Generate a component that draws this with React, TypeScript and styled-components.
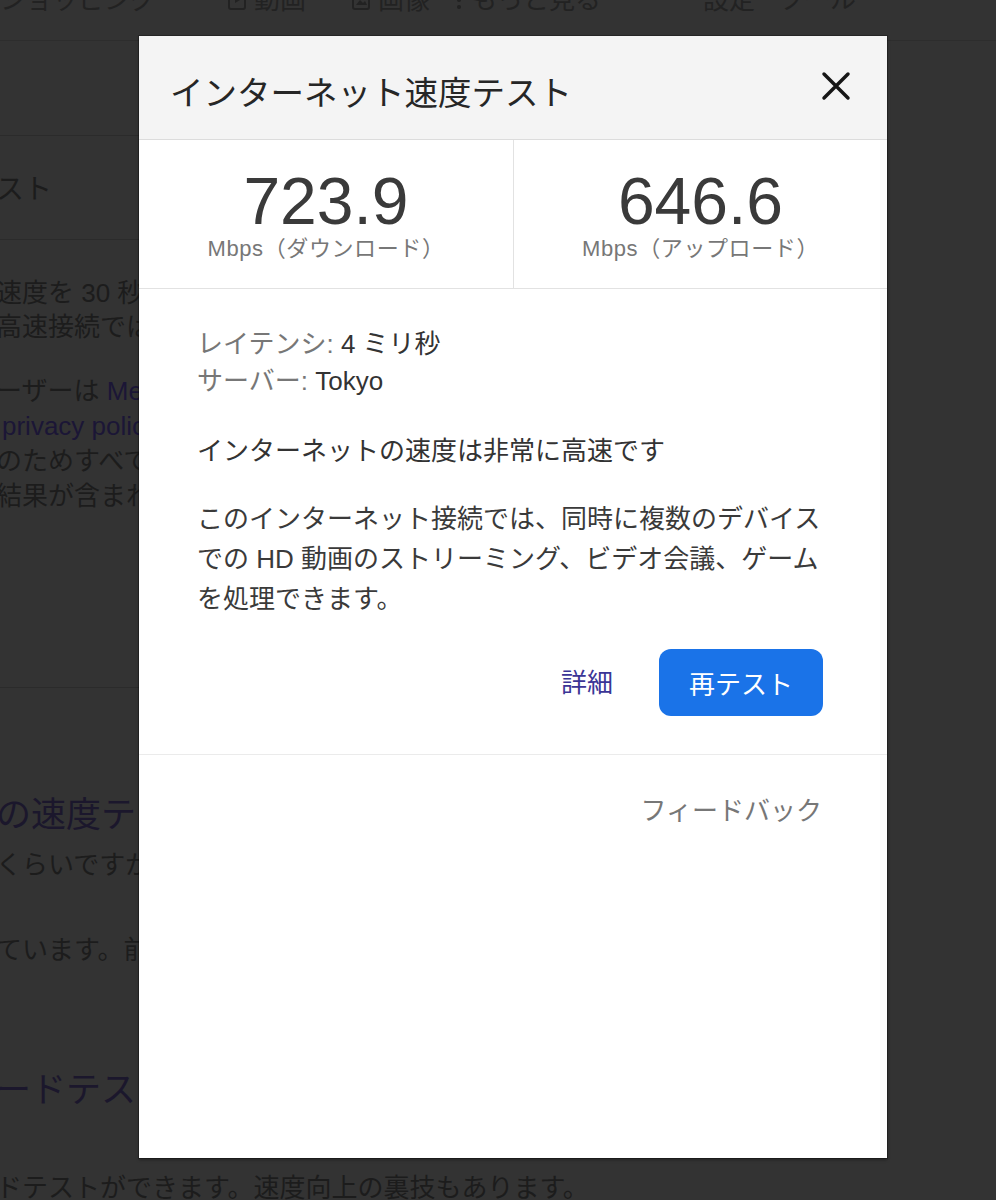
import styled, { createGlobalStyle } from 'styled-components';

const GlobalStyle = createGlobalStyle`
  html, body {
    margin: 0;
    padding: 0;
    background: #333;
  }
  body {
    font-family: 'Liberation Sans', 'Noto Sans CJK JP', sans-serif;
  }
`;

const Page = styled.div`
  position: relative;
  width: 996px;
  height: 1200px;
  overflow: hidden;
  background: #333;
  color: #1f1f1f;
`;

/* dimmed search page behind the dialog */

const TopNav = styled.nav`
  height: 40px;
  border-bottom: 1px solid #2d2d2d;
  display: flex;
  align-items: flex-start;
  overflow: hidden;
`;

const NavItem = styled.div<{ $gap: number }>`
  margin-left: ${(p) => p.$gap}px;
  margin-top: -14px;
  display: flex;
  align-items: center;
  gap: 8px;
  font-size: 26px;
  line-height: 28px;
  color: #222;
  white-space: nowrap;
`;

const Column = styled.div`
  width: 780px;
  margin-left: -4px;
`;

const TabsBand = styled.div`
  height: 94px;
  border-bottom: 1px solid #2b2b2b;
`;

const TitleBand = styled.div`
  height: 98px;
  padding-top: 5px;
  line-height: 98px;
  font-size: 28px;
  color: #1c1c1c;
  border-bottom: 1px solid #2b2b2b;
  white-space: nowrap;
`;

const BgPara = styled.div<{ $top: number; $lh: number }>`
  margin-top: ${(p) => p.$top}px;
  font-size: 26px;
  line-height: ${(p) => p.$lh}px;
  color: #1c1c1c;
  white-space: nowrap;
`;

const BgLine = styled.div<{ $indent?: number }>`
  padding-left: ${(p) => p.$indent ?? 0}px;
`;

const BgLink = styled.span`
  color: #1b1636;
`;

const BgRule = styled.div<{ $top: number }>`
  margin-top: ${(p) => p.$top}px;
  border-top: 1px solid #2b2b2b;
`;

const BgHeading = styled.div<{ $top: number }>`
  margin-top: ${(p) => p.$top}px;
  font-size: 35px;
  line-height: 44px;
  color: #1b172c;
  white-space: nowrap;
`;

/* dialog */

const Dialog = styled.div`
  position: absolute;
  top: 36px;
  left: 139px;
  width: 748px;
  height: 1122px;
  background: #fff;
  box-shadow: 0 0 0 1px rgba(0, 0, 0, 0.25), 0 2px 3px rgba(0, 0, 0, 0.35);
  display: flex;
  flex-direction: column;
`;

const Header = styled.div`
  height: 103px;
  background: #f4f4f4;
  border-bottom: 1px solid #dcdcdc;
  display: flex;
  align-items: center;
  justify-content: space-between;
  padding: 0 35px 0 31px;
`;

const Title = styled.h1`
  margin: 12px 0 0;
  font-size: 33.5px;
  line-height: 40px;
  font-weight: 400;
  color: #262626;
`;

const CloseButton = styled.button`
  margin-top: -4px;
  width: 32px;
  height: 32px;
  padding: 0;
  border: none;
  background: transparent;
  cursor: pointer;
  display: flex;
`;

const SpeedRow = styled.div`
  display: grid;
  grid-template-columns: 1fr 1fr;
  border-bottom: 1px solid #e2e2e2;
`;

const SpeedCell = styled.div<{ $divider?: boolean }>`
  padding: 28px 0 26px;
  text-align: center;
  border-left: ${(p) => (p.$divider ? '1px solid #e2e2e2' : 'none')};
`;

const SpeedValue = styled.div`
  font-size: 66px;
  line-height: 66px;
  color: #3a3a3a;
`;

const SpeedUnit = styled.div`
  margin-top: 2px;
  font-size: 22px;
  line-height: 26px;
  color: #777;
  letter-spacing: 0.6px;
`;

const Body = styled.div`
  padding: 37px 64px 38px 58px;
  border-bottom: 1px solid #ebebeb;
`;

const Stats = styled.div`
  font-size: 26px;
  line-height: 37px;
`;

const StatLabel = styled.span`
  color: #777;
`;

const StatValue = styled.span`
  color: #333;
`;

const Verdict = styled.p`
  margin: 31px 0 0;
  font-size: 26px;
  line-height: 41px;
  color: #333;
`;

const Description = styled.p`
  margin: 27px -4px 0 0;
  font-size: 26px;
  line-height: 40px;
  color: #3a3a3a;
`;

const Actions = styled.div`
  margin-top: 30px;
  display: flex;
  justify-content: flex-end;
  align-items: center;
  gap: 46px;
`;

const DetailsLink = styled.a`
  font-size: 26px;
  line-height: 34px;
  color: #3b3596;
  text-decoration: none;
  cursor: pointer;
`;

const RetestButton = styled.button`
  height: 67px;
  padding: 0 30px;
  border: none;
  border-radius: 12px;
  background: #1a73e8;
  color: #fff;
  font-family: inherit;
  font-size: 26px;
  cursor: pointer;
`;

const Footer = styled.div`
  padding: 38px 65px 0 0;
  text-align: right;
`;

const FeedbackLink = styled.a`
  font-size: 26px;
  line-height: 37px;
  color: #777;
  cursor: pointer;
`;

const navItems = [
  { label: 'ショッピング', gap: 0 },
  { label: '動画', icon: 'video', gap: 72 },
  { label: '画像', icon: 'image', gap: 46 },
  { label: 'もっと見る', icon: 'more', gap: 25 },
  { label: '設定', gap: 102 },
  { label: 'ツール', gap: 23 },
];

const NavIcon = ({ kind }: { kind?: string }) => {
  if (!kind) return null;
  if (kind === 'more') {
    return (
      <svg width="8" height="22" viewBox="0 0 8 22">
        <circle cx="4" cy="4" r="2" fill="#222" />
        <circle cx="4" cy="11" r="2" fill="#222" />
        <circle cx="4" cy="18" r="2" fill="#222" />
      </svg>
    );
  }
  return (
    <svg width="18" height="20" viewBox="0 0 18 20">
      <rect x="1" y="1" width="16" height="18" rx="2" fill="none" stroke="#222" strokeWidth="2" />
      {kind === 'video' ? (
        <path d="M7 7 L12 10 L7 13 Z" fill="#222" />
      ) : (
        <path d="M4 15 L8 10 L11 13 L13 11 L15 15 Z" fill="#222" />
      )}
    </svg>
  );
};

const CloseIcon = () => (
  <svg width="32" height="32" viewBox="0 0 24 24">
    <path d="M3 3 L21 21 M21 3 L3 21" stroke="#161616" strokeWidth="2.6" strokeLinecap="round" />
  </svg>
);

const App = () => {
  return (
    <Page>
      <GlobalStyle />
      <TopNav>
        {navItems.map((item) => (
          <NavItem key={item.label} $gap={item.gap}>
            <NavIcon kind={item.icon} />
            {item.label}
          </NavItem>
        ))}
      </TopNav>

      <Column>
        <TabsBand />
        <TitleBand>スト</TitleBand>
        <BgPara $top={36} $lh={34}>
          <BgLine>速度を 30 秒ほどで測定します。</BgLine>
          <BgLine>高速接続ではより多くのデータが送信されます。</BgLine>
        </BgPara>
        <BgPara $top={30} $lh={35}>
          <BgLine>
            ーザーは <BgLink>Measurement Lab</BgLink>
          </BgLine>
          <BgLine $indent={6}>
            <BgLink>privacy policy</BgLink>
          </BgLine>
          <BgLine>のためすべてのテスト</BgLine>
          <BgLine>結果が含まれます。</BgLine>
        </BgPara>
        <BgRule $top={173} />
        <BgHeading $top={105}>の速度テスト</BgHeading>
        <BgPara $top={11} $lh={34}>
          <BgLine>くらいですが</BgLine>
        </BgPara>
        <BgPara $top={51} $lh={34}>
          <BgLine>ています。前回の結果</BgLine>
        </BgPara>
        <BgHeading $top={101}>ードテスト</BgHeading>
        <BgPara $top={59} $lh={34}>
          <BgLine>ドテストができます。速度向上の裏技もあります。</BgLine>
        </BgPara>
      </Column>

      <Dialog>
        <Header>
          <Title>インターネット速度テスト</Title>
          <CloseButton aria-label="閉じる">
            <CloseIcon />
          </CloseButton>
        </Header>

        <SpeedRow>
          <SpeedCell>
            <SpeedValue>723.9</SpeedValue>
            <SpeedUnit>Mbps（ダウンロード）</SpeedUnit>
          </SpeedCell>
          <SpeedCell $divider>
            <SpeedValue>646.6</SpeedValue>
            <SpeedUnit>Mbps（アップロード）</SpeedUnit>
          </SpeedCell>
        </SpeedRow>

        <Body>
          <Stats>
            <div>
              <StatLabel>レイテンシ: </StatLabel>
              <StatValue>4 ミリ秒</StatValue>
            </div>
            <div>
              <StatLabel>サーバー: </StatLabel>
              <StatValue>Tokyo</StatValue>
            </div>
          </Stats>
          <Verdict>インターネットの速度は非常に高速です</Verdict>
          <Description>
            このインターネット接続では、同時に複数のデバイスでの HD 動画のストリーミング、ビデオ会議、ゲームを処理できます。
          </Description>
          <Actions>
            <DetailsLink>詳細</DetailsLink>
            <RetestButton>再テスト</RetestButton>
          </Actions>
        </Body>

        <Footer>
          <FeedbackLink>フィードバック</FeedbackLink>
        </Footer>
      </Dialog>
    </Page>
  );
};

export default App;
